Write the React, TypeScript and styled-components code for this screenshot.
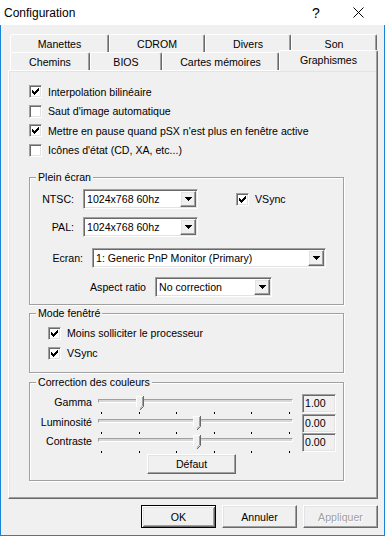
import React, { FC } from "react"
import styled, { createGlobalStyle, css } from "styled-components"

const GlobalStyle = createGlobalStyle`
  html, body {
    margin: 0;
    padding: 0;
    background: #fff;
  }
  body {
    font-family: "Liberation Sans", Arial, sans-serif;
    font-size: 10.6px;
    color: #000;
  }
  * {
    box-sizing: border-box;
  }
`

const raised = css`
  border: 1px solid;
  border-color: #fff #696969 #696969 #fff;
  box-shadow: inset -1px -1px 0 #a0a0a0, inset 1px 1px 0 #e3e3e3;
`

const sunken = css`
  border: 1px solid;
  border-color: #a0a0a0 #fff #fff #a0a0a0;
  box-shadow: inset 1px 1px 0 #696969, inset -1px -1px 0 #e3e3e3;
`

const Window = styled.div`
  width: 385px;
  height: 536px;
  display: flex;
  flex-direction: column;
`

const TitleBar = styled.div`
  height: 25px;
  background: #fff;
  display: flex;
  align-items: center;
  padding: 0 8px 0 4px;
`

const Title = styled.span`
  flex: 1;
  font-size: 12px;
`

const TitleButton = styled.div<{ $w: number }>`
  width: ${({ $w }) => $w}px;
  height: 25px;
  display: flex;
  align-items: center;
  justify-content: center;
  font-size: 14px;
`

const Frame = styled.div`
  flex: 1;
  background: #f0f0f0;
  border: 1px solid #1883d7;
  border-top: none;
  padding: 9px 6px 0 7px;
  display: flex;
  flex-direction: column;
`

const TabRow = styled.div`
  display: flex;
  align-items: flex-end;
  height: 18px;
  padding-left: 2px;
`

const Tab = styled.div<{ $w: number; $active?: boolean }>`
  width: ${({ $w }) => $w}px;
  height: 18px;
  display: flex;
  align-items: center;
  justify-content: center;
  background: #f0f0f0;
  border: 1px solid;
  border-bottom: none;
  border-color: #fff #696969 transparent #fff;
  border-radius: 2px 2px 0 0;
  box-shadow: inset -1px 0 0 #a0a0a0;
  white-space: nowrap;

  ${({ $active }) =>
    $active &&
    css`
      height: 21px;
      margin-bottom: -1px;
      padding-bottom: 3px;
      position: relative;
      z-index: 1;
    `}
`

const Panel = styled.div`
  height: 429px;
  ${raised};
  padding: 11px 0 0 20px;
`

const CheckRow = styled.div<{ $h?: number; $pad?: number; $ml?: number }>`
  display: flex;
  align-items: center;
  gap: 6px;
  height: ${({ $h }) => $h ?? 19.5}px;
  padding-left: ${({ $pad }) => $pad ?? 0}px;
  margin-left: ${({ $ml }) => $ml ?? 0}px;
  white-space: nowrap;
`

const Box = styled.span`
  width: 13px;
  height: 13px;
  flex: none;
  background: #fff;
  ${sunken};
  display: flex;
  align-items: center;
  justify-content: center;
`

const Group = styled.fieldset<{ $mt: number; $pt: number; $pb: number }>`
  width: 315px;
  min-width: 0;
  margin: ${({ $mt }) => $mt}px 0 0 0;
  padding: ${({ $pt }) => $pt}px 0 ${({ $pb }) => $pb}px 0;
  border: 1px solid #a0a0a0;
  box-shadow: inset 1px 1px 0 #fff, 1px 1px 0 #fff;
`

const Legend = styled.legend`
  margin-left: 6px;
  padding: 0 2px;
  line-height: 12px;
  background: #f0f0f0;
`

const FieldRow = styled.div<{ $pad: number; $mt: number }>`
  display: flex;
  align-items: center;
  gap: 9px;
  height: 20px;
  margin-top: ${({ $mt }) => $mt}px;
  padding-left: ${({ $pad }) => $pad}px;
`

const FieldLabel = styled.span<{ $w: number }>`
  width: ${({ $w }) => $w}px;
  text-align: right;
  white-space: nowrap;
`

const Combo = styled.div<{ $w: number }>`
  width: ${({ $w }) => $w}px;
  height: 20px;
  background: #fff;
  ${sunken};
  display: flex;
  align-items: center;
  padding: 1px 1px 1px 3px;
`

const ComboText = styled.span`
  flex: 1;
  white-space: nowrap;
  overflow: hidden;
`

const ComboButton = styled.span`
  width: 16px;
  height: 16px;
  background: #f0f0f0;
  ${raised};
  display: flex;
  align-items: center;
  justify-content: center;
`

const SliderRow = styled.div`
  display: grid;
  grid-template-columns: 62px 195px 34px;
  column-gap: 6px;
  height: 19.5px;

  & > :last-child {
    margin-left: 3px;
  }
`

const SliderLabel = styled.span`
  text-align: right;
  line-height: 16px;
  white-space: nowrap;
`

const SliderArea = styled.div`
  position: relative;
`

const Track = styled.div`
  margin-top: 5px;
  height: 4px;
  border: 1px solid;
  border-color: #a0a0a0 #fff #fff #a0a0a0;
  background: #d8d8d8;
`

const Thumb = styled.svg`
  position: absolute;
  top: 2px;
  transform: translateX(-50%);
`

const Ticks = styled.div`
  display: flex;
  justify-content: space-between;
  margin-top: 9px;
  padding: 0 3px;
`

const Tick = styled.span`
  width: 1px;
  height: 2px;
  background: #000;
`

const ValueBox = styled.div`
  width: 34px;
  height: 19px;
  background: #f0f0f0;
  ${sunken};
  padding-left: 2px;
  line-height: 17px;
`

const PushButton = styled.div<{ $w: number; $h: number; $default?: boolean; $disabled?: boolean }>`
  width: ${({ $w }) => $w}px;
  height: ${({ $h }) => $h}px;
  display: flex;
  align-items: center;
  justify-content: center;
  background: #f0f0f0;
  ${raised};
  color: ${({ $disabled }) => ($disabled ? "#a0a0a0" : "#000")};
  text-shadow: ${({ $disabled }) => ($disabled ? "1px 1px 0 #fff" : "none")};

  ${({ $default }) =>
    $default &&
    css`
      border: 1px solid #000;
      box-shadow: inset 1px 1px 0 #fff, inset -1px -1px 0 #696969,
        inset 2px 2px 0 #e3e3e3, inset -2px -2px 0 #a0a0a0;
    `}
`

const DefaultWrap = styled.div`
  margin: 1px 0 0 117px;
`

const ButtonBar = styled.div`
  display: flex;
  justify-content: flex-end;
  gap: 6px;
  margin-top: 6px;
`

const Check: FC<{ checked?: boolean }> = ({ checked }) => (
  <Box>
    {checked && (
      <svg width="7" height="7" viewBox="0 0 7 7" shapeRendering="crispEdges">
        <path d="M6 0h1v3h-1v1h-1v1h-1v1h-1v1h-1v-1h-1v-1h-1v-3h1v1h1v1h1v-1h1v-1h1z" fill="#000" />
      </svg>
    )}
  </Box>
)

const Arrow = () => (
  <svg width="7" height="4" viewBox="0 0 7 4" shapeRendering="crispEdges">
    <path d="M0 0h7v1h-1v1h-1v1h-1v1h-1v-1h-1v-1h-1v-1h-1z" fill="#000" />
  </svg>
)

const Select: FC<{ w: number; value: string }> = ({ w, value }) => (
  <Combo $w={w}>
    <ComboText>{value}</ComboText>
    <ComboButton>
      <Arrow />
    </ComboButton>
  </Combo>
)

const sliders = [
  { label: "Gamma", pos: 21.5, value: "1.00" },
  { label: "Luminosité", pos: 51, value: "0.00" },
  { label: "Contraste", pos: 51, value: "0.00" },
]

const App: FC = () => (
  <>
    <GlobalStyle />
    <Window>
      <TitleBar>
        <Title>Configuration</Title>
        <TitleButton $w={46}>?</TitleButton>
        <TitleButton $w={38}>
          <svg width="11" height="11" viewBox="0 0 11 11">
            <path d="M0.5 0.5L10.5 10.5M10.5 0.5L0.5 10.5" stroke="#000" strokeWidth="1" />
          </svg>
        </TitleButton>
      </TitleBar>

      <Frame>
        <TabRow>
          <Tab $w={99}>Manettes</Tab>
          <Tab $w={96}>CDROM</Tab>
          <Tab $w={86}>Divers</Tab>
          <Tab $w={86}>Son</Tab>
        </TabRow>
        <TabRow>
          <Tab $w={80}>Chemins</Tab>
          <Tab $w={72}>BIOS</Tab>
          <Tab $w={117}>Cartes mémoires</Tab>
          <Tab $w={99} $active>
            Graphismes
          </Tab>
        </TabRow>

        <Panel>
          <CheckRow>
            <Check checked />
            Interpolation bilinéaire
          </CheckRow>
          <CheckRow>
            <Check />
            Saut d'image automatique
          </CheckRow>
          <CheckRow>
            <Check checked />
            Mettre en pause quand pSX n'est plus en fenêtre active
          </CheckRow>
          <CheckRow>
            <Check />
            Icônes d'état (CD, XA, etc...)
          </CheckRow>

          <Group $mt={11} $pt={6} $pb={7}>
            <Legend>Plein écran</Legend>
            <FieldRow $pad={0} $mt={0}>
              <FieldLabel $w={44}>NTSC:</FieldLabel>
              <Select w={115} value="1024x768 60hz" />
              <CheckRow $h={20} $ml={29}>
                <Check checked />
                VSync
              </CheckRow>
            </FieldRow>
            <FieldRow $pad={0} $mt={8}>
              <FieldLabel $w={44}>PAL:</FieldLabel>
              <Select w={115} value="1024x768 60hz" />
            </FieldRow>
            <FieldRow $pad={22} $mt={11}>
              <FieldLabel $w={31}>Ecran:</FieldLabel>
              <Select w={234} value="1: Generic PnP Monitor (Primary)" />
            </FieldRow>
            <FieldRow $pad={60} $mt={9}>
              <FieldLabel $w={56}>Aspect ratio</FieldLabel>
              <Select w={117} value="No correction" />
            </FieldRow>
          </Group>

          <Group $mt={2} $pt={4} $pb={9}>
            <Legend>Mode fenêtré</Legend>
            <CheckRow $h={20} $pad={18}>
              <Check checked />
              Moins solliciter le processeur
            </CheckRow>
            <CheckRow $h={20} $pad={18}>
              <Check checked />
              VSync
            </CheckRow>
          </Group>

          <Group $mt={3} $pt={6} $pb={6}>
            <Legend>Correction des couleurs</Legend>
            {sliders.map((s) => (
              <SliderRow key={s.label}>
                <SliderLabel>{s.label}</SliderLabel>
                <SliderArea>
                  <Track />
                  <Thumb width="8" height="15" viewBox="0 0 8 15" style={{ left: `${s.pos}%` }}>
                    <path d="M0.5 0.5H7.5V10.5L4 14L0.5 10.5Z" fill="#f0f0f0" />
                    <path d="M0.5 11V0.5H7" stroke="#fff" fill="none" />
                    <path d="M7.5 0V10.5L4 14" stroke="#696969" fill="none" />
                    <path d="M6.5 1V10L3.8 12.7" stroke="#a0a0a0" fill="none" />
                  </Thumb>
                  <Ticks>
                    {[0, 1, 2, 3, 4, 5].map((i) => (
                      <Tick key={i} />
                    ))}
                  </Ticks>
                </SliderArea>
                <ValueBox>{s.value}</ValueBox>
              </SliderRow>
            ))}
            <DefaultWrap>
              <PushButton $w={89} $h={20}>
                Défaut
              </PushButton>
            </DefaultWrap>
          </Group>
        </Panel>

        <ButtonBar>
          <PushButton $w={75} $h={23} $default>
            OK
          </PushButton>
          <PushButton $w={75} $h={23}>
            Annuler
          </PushButton>
          <PushButton $w={75} $h={23} $disabled>
            Appliquer
          </PushButton>
        </ButtonBar>
      </Frame>
    </Window>
  </>
)

export default App
